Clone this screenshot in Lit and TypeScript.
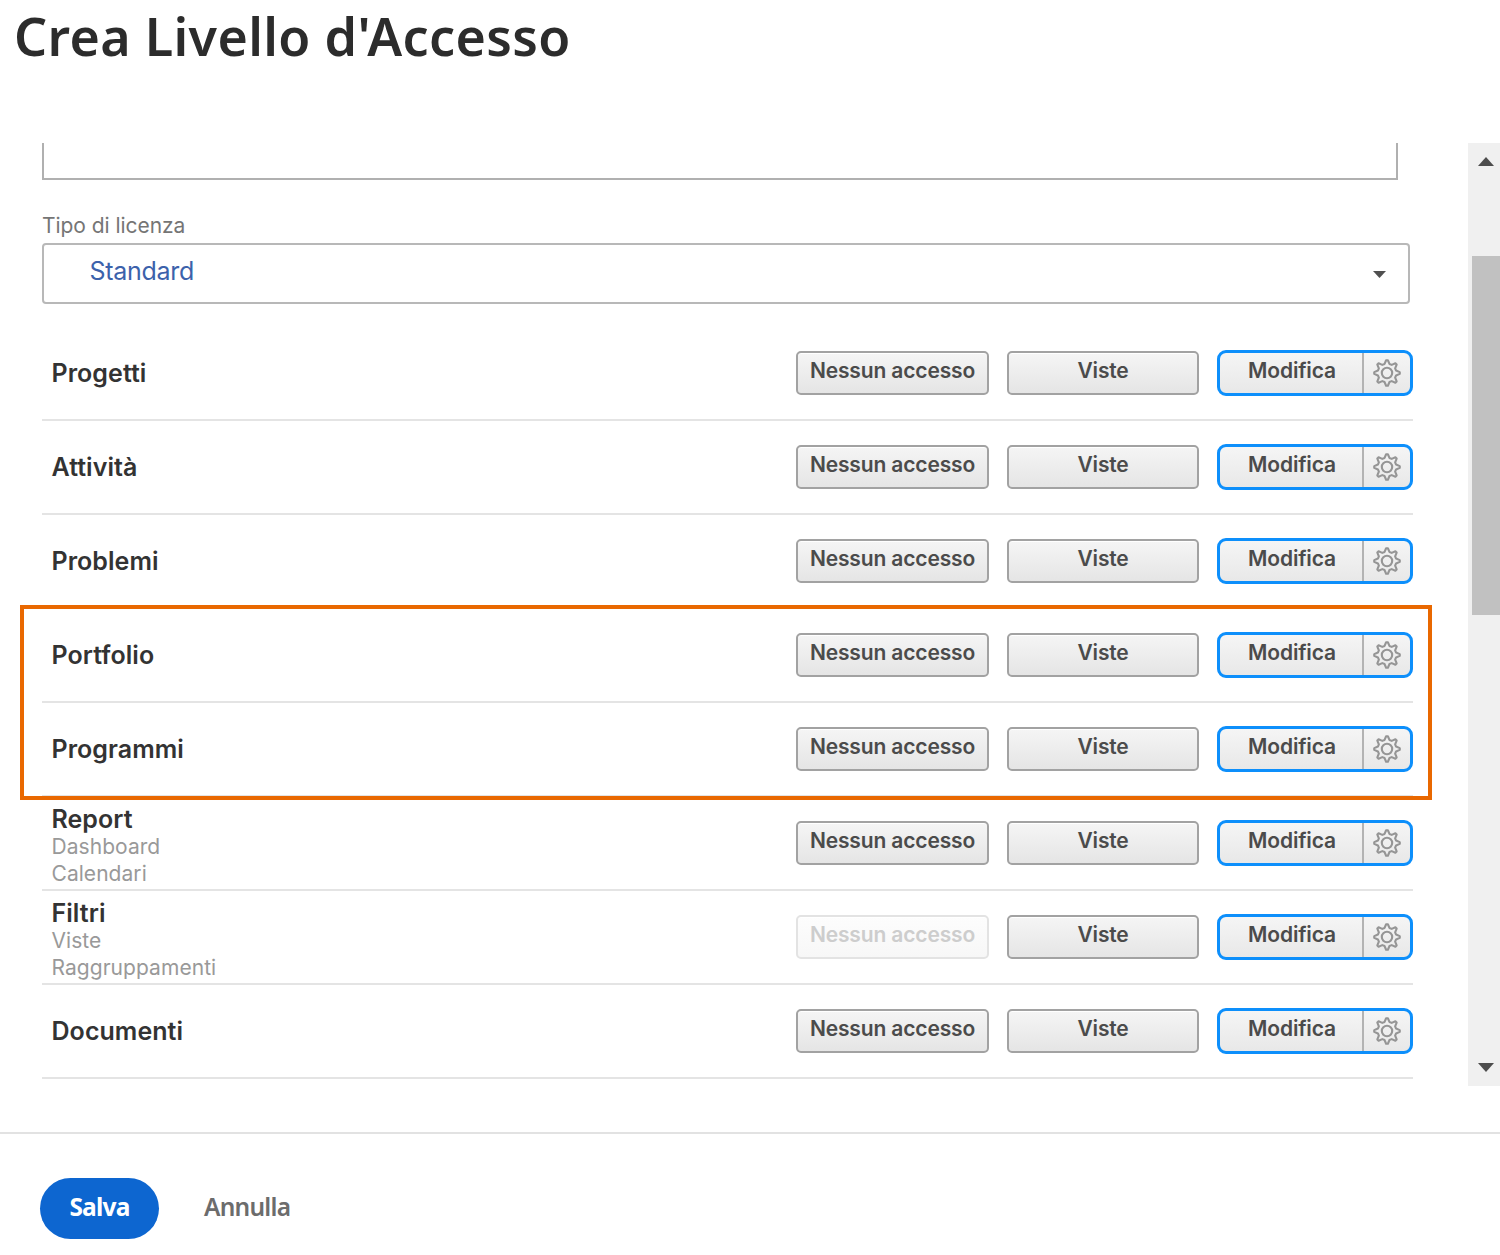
import { LitElement, html, css, nothing } from 'lit';
import { customElement, property } from 'lit/decorators.js';
import { classMap } from 'lit/directives/class-map.js';

interface AccessRow {
  name: string;
  related?: string[];
  noAccessDisabled?: boolean;
}

const ROWS: AccessRow[] = [
  { name: 'Progetti' },
  { name: 'Attività' },
  { name: 'Problemi' },
  { name: 'Portfolio' },
  { name: 'Programmi' },
  { name: 'Report', related: ['Dashboard', 'Calendari'] },
  { name: 'Filtri', related: ['Viste', 'Raggruppamenti'], noAccessDisabled: true },
  { name: 'Documenti' },
];

/** Outline of an eight-toothed gear around the origin. */
function gearPath(): string {
  const points: string[] = [];
  const at = (radius: number, degrees: number) => {
    const a = (degrees * Math.PI) / 180;
    return `${(radius * Math.cos(a)).toFixed(2)} ${(radius * Math.sin(a)).toFixed(2)}`;
  };
  for (let i = 0; i < 8; i++) {
    const c = i * 45;
    points.push(at(9.4, c - 15), at(12.8, c - 4), at(12.8, c + 4), at(9.4, c + 15));
  }
  return `M${points.join('L')}Z`;
}

const GEAR = gearPath();

@customElement('access-row')
export class AccessRowElement extends LitElement {
  @property({ attribute: false }) row!: AccessRow;

  static styles = css`
    :host {
      display: flex;
      box-sizing: border-box;
      height: 94.05px;
      align-items: center;
      border-bottom: 2px solid #e4e4e4;
      padding-left: 9.5px;
      font-family: Inter, 'Liberation Sans', sans-serif;
    }
    .names {
      flex: 1;
      padding-top: 1px;
    }
    .names.stacked {
      padding-top: 7px;
    }
    .name {
      font-size: 25px;
      font-weight: 600;
      line-height: 27px;
      letter-spacing: 0.05px;
      color: #333;
    }
    .related {
      font-size: 21px;
      line-height: 27px;
      letter-spacing: 0.05px;
      color: #999;
    }
    .choices {
      display: flex;
      align-items: center;
      margin-top: -1px;
    }
    button {
      box-sizing: border-box;
      height: 44px;
      margin: 0;
      padding: 0 0 4px;
      border: 2px solid #a2a2a2;
      border-radius: 5px;
      background: linear-gradient(#f5f5f5, #e5e5e5);
      box-shadow: inset 0 1px 0 #fff;
      font: 600 21px/30px Inter, 'Liberation Sans', sans-serif;
      letter-spacing: -0.15px;
      color: #4b4b4b;
      white-space: nowrap;
    }
    .none {
      width: 193px;
      margin-right: 18px;
    }
    .view {
      width: 192px;
      margin-right: 18px;
    }
    button:disabled {
      border-color: #e3e3e3;
      background: linear-gradient(#fdfdfd, #f7f7f7);
      color: #cdcdcd;
    }
    .edit {
      display: flex;
      box-sizing: border-box;
      width: 196px;
      height: 46px;
      border: 3px solid #0d8ffb;
      border-radius: 9px;
      background: linear-gradient(#f5f5f5, #e8e8e8);
      overflow: hidden;
    }
    .edit button {
      height: 40px;
      border: 0;
      border-radius: 0;
      background: none;
      box-shadow: none;
    }
    .edit .modify {
      flex: 1;
      padding-left: 2px;
    }
    .edit .gear {
      display: flex;
      width: 48px;
      padding: 1px 1px 0 0;
      border-left: 2px solid #b3b3b3;
      align-items: center;
      justify-content: center;
    }
  `;

  render() {
    const { name, related, noAccessDisabled } = this.row;
    return html`
      <div class=${classMap({ names: true, stacked: !!related })}>
        <div class="name">${name}</div>
        ${related ? related.map((r) => html`<div class="related">${r}</div>`) : nothing}
      </div>
      <div class="choices">
        <button class="none" ?disabled=${!!noAccessDisabled}>Nessun accesso</button>
        <button class="view">Viste</button>
        <div class="edit">
          <button class="modify">Modifica</button>
          <button class="gear">
            <svg width="30" height="30" viewBox="-15 -15 30 30" fill="none" stroke="#959595" stroke-width="2.1" stroke-linejoin="round">
              <path d=${GEAR}></path>
              <circle r="5.2"></circle>
            </svg>
          </button>
        </div>
      </div>
    `;
  }
}

@customElement('app-root')
export class AppRoot extends LitElement {
  static styles = css`
    :host {
      display: flex;
      flex-direction: column;
      box-sizing: border-box;
      width: 1500px;
      height: 1255px;
      overflow: hidden;
      background: #fff;
      font-family: Inter, 'Liberation Sans', sans-serif;
    }
    header {
      height: 143px;
      flex: none;
    }
    h1 {
      margin: 0;
      padding-left: 14px;
      font: 600 52px/72px 'Noto Sans', sans-serif;
      letter-spacing: 0.35px;
      color: #2c2c2c;
    }
    .body {
      display: flex;
      height: 943px;
      flex: none;
      justify-content: space-between;
    }
    .form {
      position: relative;
      width: 1371px;
      margin-left: 42px;
    }
    .textarea {
      box-sizing: border-box;
      width: 1356px;
      height: 37px;
      border: solid #b0b0b0;
      border-width: 0 2px 2px;
    }
    .label {
      padding: 32px 0 0;
      font-size: 21px;
      line-height: 28px;
      letter-spacing: -0.05px;
      color: #757575;
    }
    .select {
      display: flex;
      box-sizing: border-box;
      width: 1368px;
      height: 61px;
      margin: 3px 0 23px;
      padding: 0 22px 5px 45.5px;
      border: 2px solid #b8b8b8;
      border-radius: 4px;
      align-items: center;
      justify-content: space-between;
      font-size: 25px;
      letter-spacing: -0.3px;
      color: #3c62ab;
    }
    .select svg {
      margin-top: 7px;
    }
    .highlight {
      position: absolute;
      left: -22px;
      top: 462px;
      box-sizing: border-box;
      width: 1412px;
      height: 195px;
      border: 4px solid #e96800;
    }
    .scrollbar {
      display: flex;
      flex-direction: column;
      box-sizing: border-box;
      width: 32px;
      background: #f0f0f0;
      padding: 14px 0 14px 3px;
      align-items: flex-end;
      justify-content: space-between;
    }
    .scrollbar svg {
      margin-right: 6px;
    }
    .thumb {
      width: 28px;
      height: 359px;
      margin-bottom: 358px;
      background: #c1c1c1;
    }
    footer {
      display: flex;
      align-items: flex-start;
      height: 123px;
      box-sizing: border-box;
      margin-top: 46px;
      padding: 44px 0 0 40px;
      border-top: 2px solid #e2e2e2;
    }
    footer button {
      height: 61px;
      margin: 0;
      padding: 0 0 4px;
      border: 0;
      background: none;
      font: 600 24.5px/34px 'Noto Sans', sans-serif;
      letter-spacing: -0.75px;
      color: #6c6c6c;
    }
    footer .save {
      width: 119px;
      margin-right: 45px;
      border-radius: 31px;
      background: #0d66d0;
      font-weight: 700;
      letter-spacing: -0.8px;
      color: #fff;
    }
  `;

  render() {
    return html`
      <header><h1>Crea Livello d'Accesso</h1></header>
      <div class="body">
        <div class="form">
          <div class="textarea"></div>
          <div class="label">Tipo di licenza</div>
          <div class="select">
            <span>Standard</span>
            <svg width="13" height="7" viewBox="0 0 13 7"><path d="M0 0H13L6.5 7Z" fill="#505050"></path></svg>
          </div>
          ${ROWS.map((row) => html`<access-row .row=${row}></access-row>`)}
          <div class="highlight"></div>
        </div>
        <div class="scrollbar">
          <svg width="16" height="9" viewBox="0 0 16 9"><path d="M0 9L8 0L16 9Z" fill="#4d4d4d"></path></svg>
          <div class="thumb"></div>
          <svg width="16" height="9" viewBox="0 0 16 9"><path d="M0 0H16L8 9Z" fill="#4d4d4d"></path></svg>
        </div>
      </div>
      <footer>
        <button class="save">Salva</button>
        <button class="cancel">Annulla</button>
      </footer>
    `;
  }
}
